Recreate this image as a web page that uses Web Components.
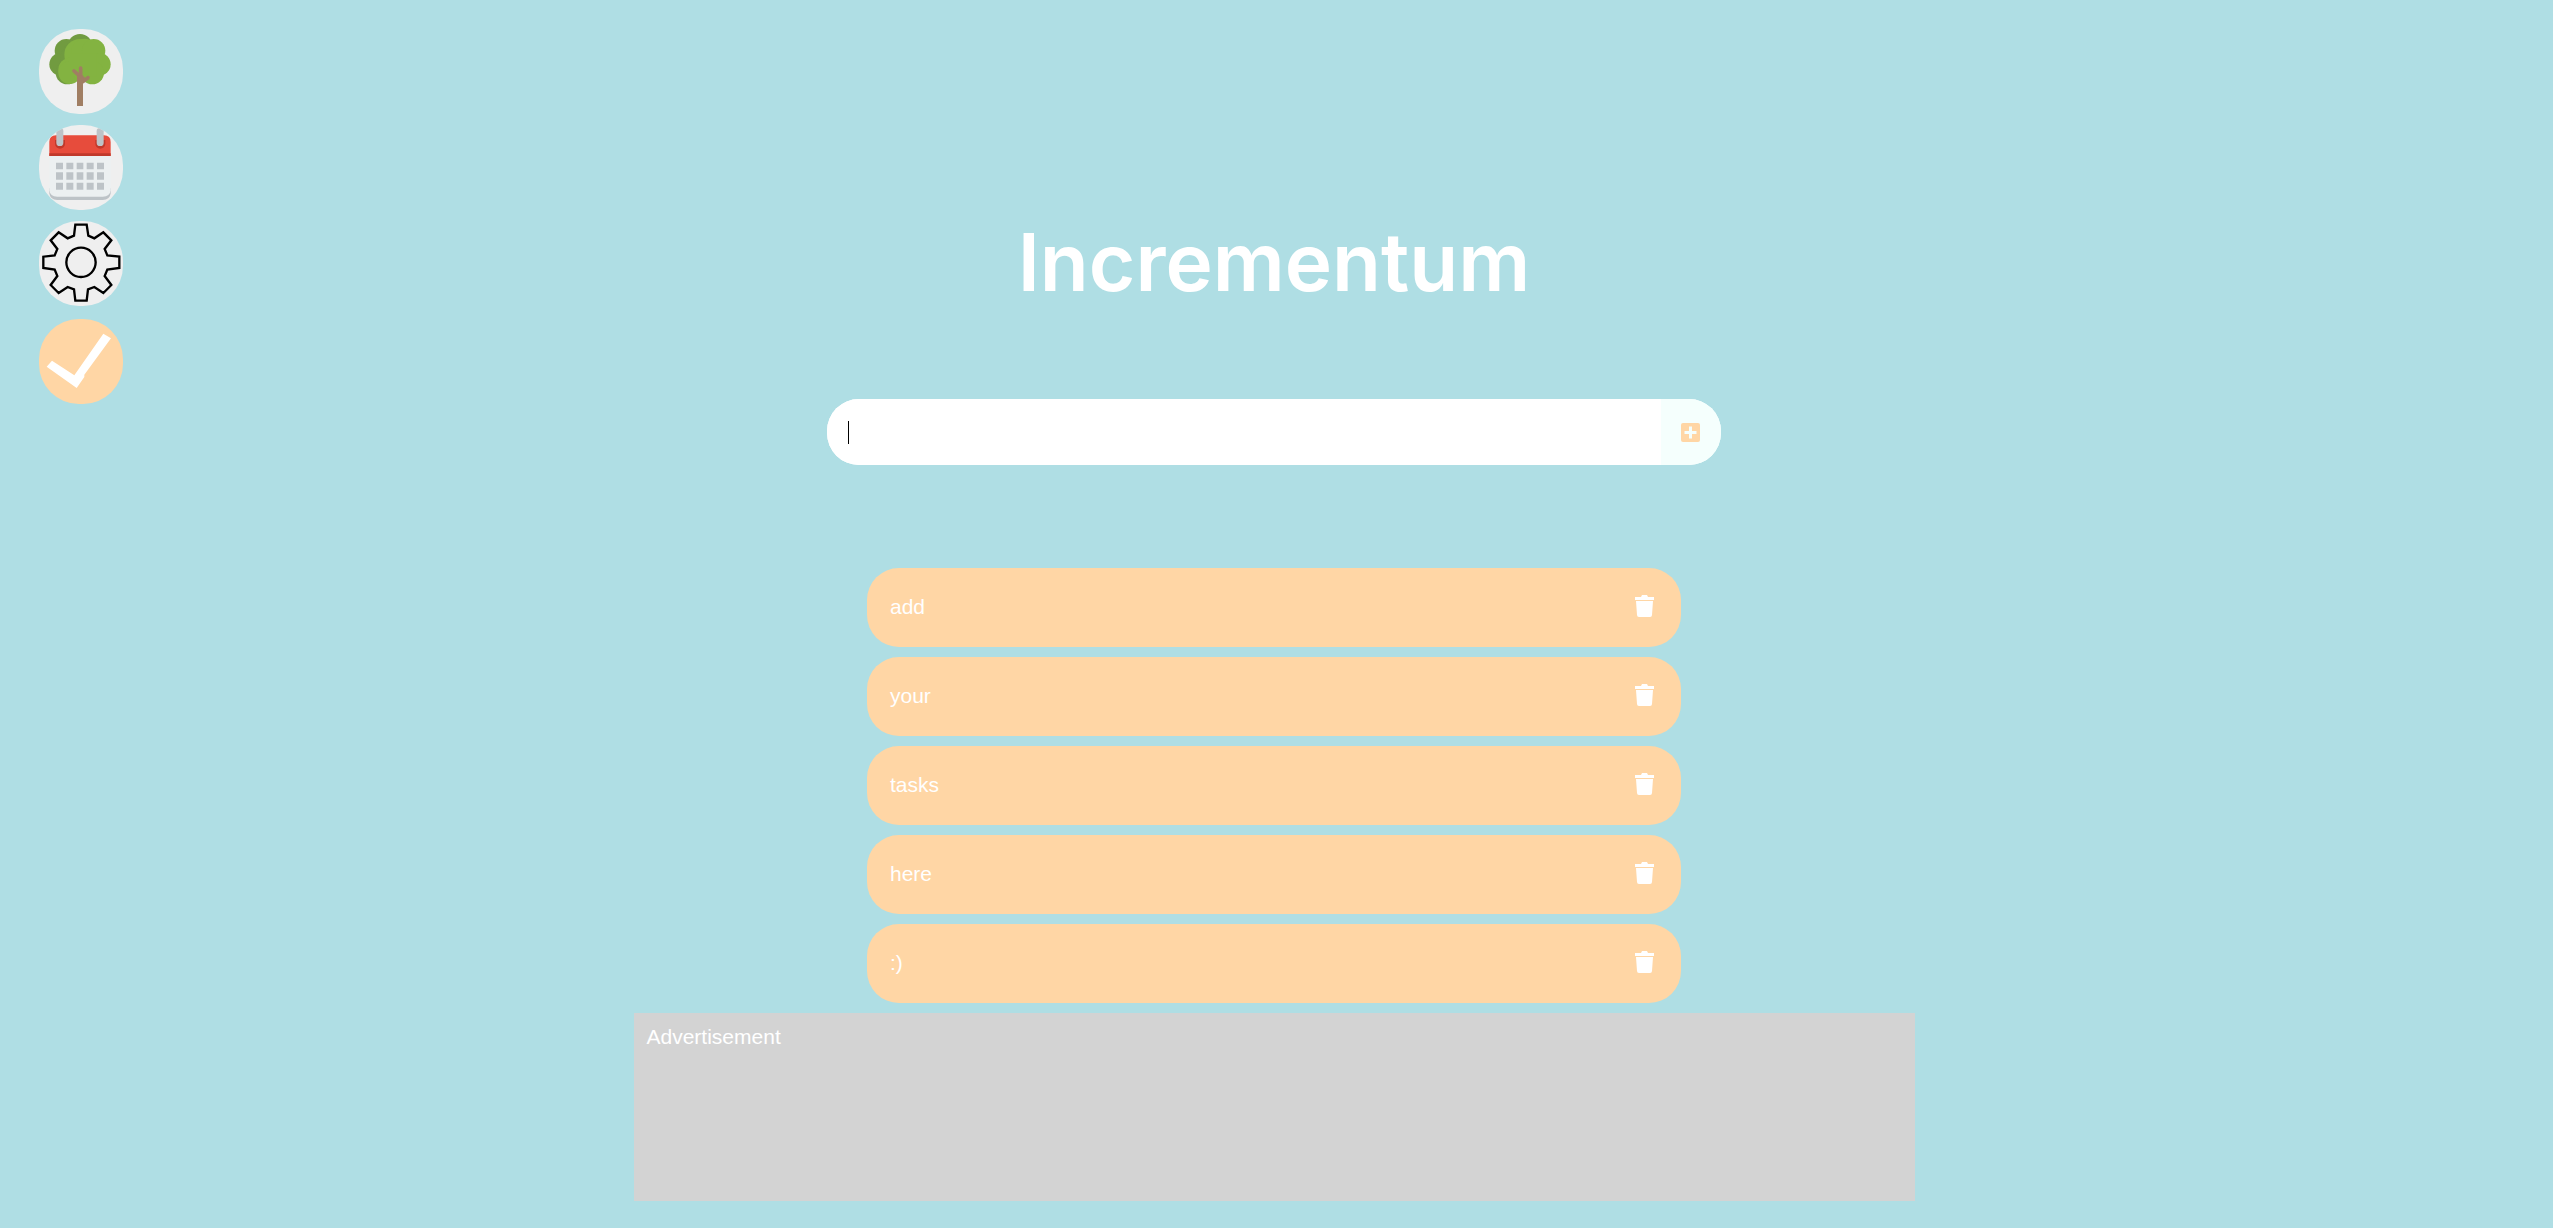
<!DOCTYPE html>
<html lang="en">
<head>
<meta charset="utf-8">
<meta name="viewport" content="width=device-width, initial-scale=1">
<title>Incrementum</title>
<style>
  html { --sky: #afdee4; --peach: #ffd6a5; --button: #efefef; background: var(--sky); }
  body { margin: 0; font: 21px/24px "Liberation Sans", Arial, sans-serif; color: #fff; }
</style>
</head>
<body>
<incrementum-app></incrementum-app>

<template id="app">
  <style>
    :host { display: block; box-sizing: border-box; padding: 0 5px 24px 0; position: relative; }
    side-menu { position: absolute; left: 39px; top: 29px; }
    main { display: flex; flex-direction: column; align-items: center; padding-top: 217px; }
    h1 { margin: 0 0 92px; font: 600 80px/90px Inter, sans-serif; }
    task-form { width: 35vw; min-width: 280px; margin-bottom: 103px; }
    ul { list-style: none; margin: 0 0 10px; padding: 0; width: 814px; max-width: 90%; display: flex; flex-direction: column; gap: 10px; }
    ad-banner { width: 1281px; max-width: 100%; }
  </style>
  <side-menu></side-menu>
  <main>
    <h1>Incrementum</h1>
    <task-form></task-form>
    <ul>
      <li><task-item>add</task-item></li>
      <li><task-item>your</task-item></li>
      <li><task-item>tasks</task-item></li>
      <li><task-item>here</task-item></li>
      <li><task-item>:)</task-item></li>
    </ul>
    <ad-banner>Advertisement</ad-banner>
  </main>
</template>

<template id="menu">
  <style>
    :host { display: block; }
    nav, .group { display: flex; flex-direction: column; }
    nav { gap: 13px; }
    .group { gap: 11px; }
  </style>
  <nav aria-label="Menu">
    <div class="group">
      <round-button label="Tree">
        <svg viewBox="57 57 252 255">
          <g fill="#719b40">
            <circle cx="180" cy="109" r="37"/><circle cx="139" cy="122" r="35"/>
            <circle cx="122" cy="163" r="34"/><circle cx="142" cy="188" r="35"/>
            <circle cx="180" cy="150" r="60"/>
          </g>
          <g fill="#83b341">
            <circle cx="180" cy="134" r="47"/><circle cx="194" cy="126" r="40"/><circle cx="221" cy="122" r="35"/>
            <circle cx="238" cy="163" r="34"/><circle cx="217" cy="188" r="35"/>
            <circle cx="151" cy="179" r="36"/><circle cx="149" cy="188" r="34"/>
            <rect x="150" y="130" width="80" height="70"/>
          </g>
          <path d="M162 183 180 199M182 174V199M204 203 188 215" fill="none" stroke="#a07e63" stroke-width="11" stroke-linecap="round" stroke-linejoin="round"/>
          <path d="M171 196H188L198 207 189 218V288H171Z" fill="#a07e63"/>
        </svg>
      </round-button>
      <round-button label="Calendar">
        <svg viewBox="57 345 252 255">
          <path d="M88 535V550Q90 570 112 570H248Q270 570 272 550V535Z" fill="#bdc3c7"/>
          <path d="M88 437H272V541Q270 560 248 560H112Q90 560 88 541Z" fill="#ecf0f1"/>
          <path d="M88 438V396Q88 376 108 376H252Q272 376 272 396V438Z" fill="#e74c3c"/>
          <g fill="#c0392b">
            <path d="M88 430H272V438H88Z"/>
            <path d="M105 390V401A15 15 0 0 0 135 401V390ZM226 390V401A15 15 0 0 0 256 401V390Z"/>
          </g>
          <g fill="#bdc3c7">
            <rect x="109" y="354" width="21" height="54" rx="10"/>
            <rect x="230" y="354" width="21" height="54" rx="10"/>
            <path d="M108 458h21v20h-21zM139 458h21v20h-21zM170 458h20v20h-20zM200 458h21v20h-21zM231 458h21v20h-21zM108 487h21v22h-21zM139 487h21v22h-21zM170 487h20v22h-20zM200 487h21v22h-21zM231 487h21v22h-21zM108 518h21v21h-21zM139 518h21v21h-21zM170 518h20v21h-20zM200 518h21v21h-21zM231 518h21v21h-21z"/>
          </g>
        </svg>
      </round-button>
      <round-button label="Settings">
        <svg viewBox="57 63 252 255" fill="none" stroke="#000" stroke-width="7">
          <path d="M166 74H200L205 107 223 115 250 97 274 121 254 147 262 166 298 170V204L262 209 254 228 274 255 250 279 223 261 204 268 200 302H166L162 268 143 261 116 279 92 255 112 228 104 209 70 204V170L104 166 112 147 92 121 116 97 143 115 162 107Z"/>
          <circle cx="183" cy="187" r="44"/>
        </svg>
      </round-button>
    </div>
    <round-button label="Done" accent>
      <svg viewBox="57 357 252 255"><path d="M80 500 96 482 163 526 250 401 273 415 193 524V531L170 564Z" fill="#fff"/></svg>
    </round-button>
  </nav>
</template>

<template id="round">
  <style>
    :host { display: block; }
    button { display: block; width: 84px; height: 85px; padding: 0; border: 0; border-radius: 40px; background: var(--button); overflow: hidden; cursor: pointer; }
    :host([accent]) button { background: var(--peach); }
    ::slotted(svg) { display: block; width: 100%; height: 100%; }
  </style>
  <button type="button"><slot></slot></button>
</template>

<template id="form">
  <style>
    :host { display: block; }
    form { display: flex; height: 66px; border-radius: 32px; overflow: hidden; background: #fff; }
    input { flex: 1; min-width: 0; border: 0; outline: 0; padding: 0 21px; font: inherit; color: #000; caret-color: transparent;
      background: linear-gradient(#000, #000) 21px 22px / 1px 23px no-repeat #fff; }
    button { width: 60px; border: 0; padding: 0; background: #f5fffd; display: flex; align-items: center; justify-content: center; cursor: pointer; }
    svg { width: 19px; height: 19px; }
  </style>
  <form>
    <input type="text" aria-label="New task" autocomplete="off">
    <button type="submit" aria-label="Add task">
      <svg viewBox="0 0 19 19"><rect width="19" height="19" rx="2" fill="#ffd6a5"/><path d="M9.500 3.500V15.500M3.500 9.500H15.500" stroke="#f5fffd" stroke-width="3"/></svg>
    </button>
  </form>
</template>

<template id="item">
  <style>
    :host { display: flex; align-items: center; justify-content: space-between; height: 79px; box-sizing: border-box; padding: 0 27px 2px 23px; border-radius: 32px; background: var(--peach); }
    button { display: block; border: 0; padding: 0 0 1px; background: none; color: inherit; cursor: pointer; }
    svg { display: block; width: 19px; height: 22px; }
  </style>
  <span><slot></slot></span>
  <button type="button" aria-label="Delete task">
    <svg viewBox="0 0 19 22" fill="currentColor"><path d="M0 2H6L7 0H12L13 2H19V5H0ZM1 6H18L17 20Q17 22 15 22H4Q2 22 2 20Z"/></svg>
  </button>
</template>

<template id="ad">
  <style>
    :host { display: block; box-sizing: border-box; height: 188px; padding: 12px 13px; background: #d3d3d3; }
  </style>
  <slot></slot>
</template>

<script>
  const define = (name, templateId, setup) => customElements.define(name, class extends HTMLElement {
    constructor() {
      super();
      this.attachShadow({ mode: 'open' }).append(document.getElementById(templateId).content.cloneNode(true));
    }
    connectedCallback() { if (setup) setup(this, this.shadowRoot); }
  });

  define('round-button', 'round', (host, root) => root.querySelector('button').setAttribute('aria-label', host.getAttribute('label')));
  define('side-menu', 'menu');
  define('task-item', 'item', (host, root) => {
    root.querySelector('button').onclick = () => host.closest('li').remove();
  });
  define('task-form', 'form', (host, root) => {
    root.querySelector('form').onsubmit = event => {
      event.preventDefault();
      const input = root.querySelector('input');
      if (input.value.trim()) host.dispatchEvent(new CustomEvent('add-task', { detail: input.value.trim(), bubbles: true, composed: true }));
      input.value = '';
    };
  });
  define('ad-banner', 'ad');
  define('incrementum-app', 'app', (host, root) => {
    root.addEventListener('add-task', event => {
      const row = document.createElement('li');
      const item = document.createElement('task-item');
      item.textContent = event.detail;
      row.append(item);
      root.querySelector('ul').append(row);
    });
  });
</script>
</body>
</html>
